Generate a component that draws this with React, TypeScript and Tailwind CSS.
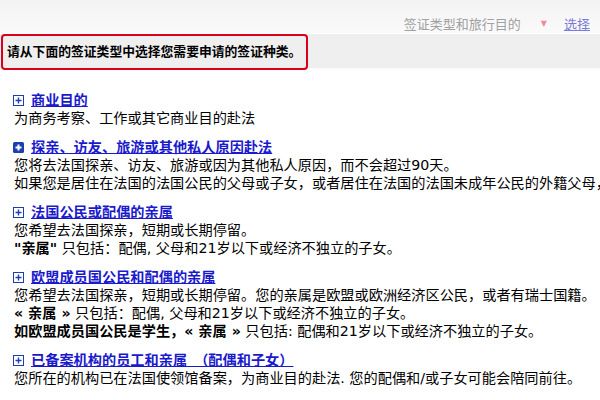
import React from "react";

type Section = {
  title: string;
  open?: boolean;
  lines: React.ReactNode[];
};

function Toggle({ open }: { open?: boolean }) {
  if (open) {
    return (
      <svg width="11" height="11" viewBox="0 0 11 11" className="shrink-0">
        <rect x="0" y="0" width="11" height="11" rx="1.5" fill="#1c3fb0" />
        <path d="M2.5 5.5h6M5.5 2.5v6" stroke="#fff" strokeWidth="2" />
      </svg>
    );
  }
  return (
    <svg width="11" height="11" viewBox="0 0 11 11" className="shrink-0">
      <rect x="0.5" y="0.5" width="10" height="10" fill="#fff" stroke="#1c3fb0" />
      <path d="M2.5 5.5h6M5.5 2.5v6" stroke="#1c3fb0" strokeWidth="1.4" />
    </svg>
  );
}

const sections: Section[] = [
  {
    title: "商业目的",
    lines: ["为商务考察、工作或其它商业目的赴法"],
  },
  {
    title: "探亲、访友、旅游或其他私人原因赴法",
    open: true,
    lines: [
      "您将去法国探亲、访友、旅游或因为其他私人原因，而不会超过90天。",
      "如果您是居住在法国的法国公民的父母或子女，或者居住在法国的法国未成年公民的外籍父母，",
    ],
  },
  {
    title: "法国公民或配偶的亲属",
    lines: [
      "您希望去法国探亲，短期或长期停留。",
      <>
        <b>"亲属"</b> 只包括：配偶, 父母和21岁以下或经济不独立的子女。
      </>,
    ],
  },
  {
    title: "欧盟成员国公民和配偶的亲属",
    lines: [
      "您希望去法国探亲，短期或长期停留。您的亲属是欧盟或欧洲经济区公民，或者有瑞士国籍。",
      <>
        <b>« 亲属 »</b> 只包括：配偶, 父母和21岁以下或经济不独立的子女。
      </>,
      <>
        <b>如欧盟成员国公民是学生，« 亲属 »</b> 只包括: 配偶和21岁以下或经济不独立的子女。
      </>,
    ],
  },
  {
    title: "已备案机构的员工和亲属　（配偶和子女）",
    lines: ["您所在的机构已在法国使领馆备案，为商业目的赴法. 您的配偶和/或子女可能会陪同前往。"],
  },
];

export default function App() {
  return (
    <div
      className="w-[600px] h-[400px] overflow-hidden bg-white text-black"
      style={{ fontFamily: '"DejaVu Sans", "Noto Sans CJK SC", sans-serif' }}
    >
      <div className="h-[33px] bg-gradient-to-b from-[#f3f3f3] to-[#fafafa] flex items-end justify-end pb-[0px] pr-[10px] text-[13px] leading-[18px]">
        <span className="text-[#a0a0a0] font-['Noto_Sans_CJK_SC']">签证类型和旅行目的</span>
        <span className="ml-[20px] text-[8px] text-[#f08aa0]">▼</span>
        <a className="ml-[17px] text-[#7a7ad8] underline font-['Noto_Sans_CJK_SC']">选择</a>
      </div>
      <div className="mt-[1px] h-[36px] bg-[#efefef] border-b-[2px] border-[#fbfbfb]">
        <div className="ml-[1px] w-[307px] h-[36px] border-2 border-[#d9001b] rounded-[4px] flex items-center pl-[4px] text-[12.8px] font-bold whitespace-nowrap">
          请从下面的签证类型中选择您需要申请的签证种类。
        </div>
      </div>
      <div className="pl-[14px] pt-[21px] text-[14.2px] leading-[18px] flex flex-col gap-[11px]">
        {sections.map((s, i) => (
          <div key={i}>
            <div className="flex items-center gap-[7px] -ml-[1px] h-[18px]">
              <Toggle open={s.open} />
              <a className="font-bold text-[#1a1acc] underline whitespace-nowrap">{s.title}</a>
            </div>
            {s.lines.map((l, j) => (
              <div key={j} className="whitespace-nowrap h-[18px]">
                {l}
              </div>
            ))}
          </div>
        ))}
      </div>
    </div>
  );
}
